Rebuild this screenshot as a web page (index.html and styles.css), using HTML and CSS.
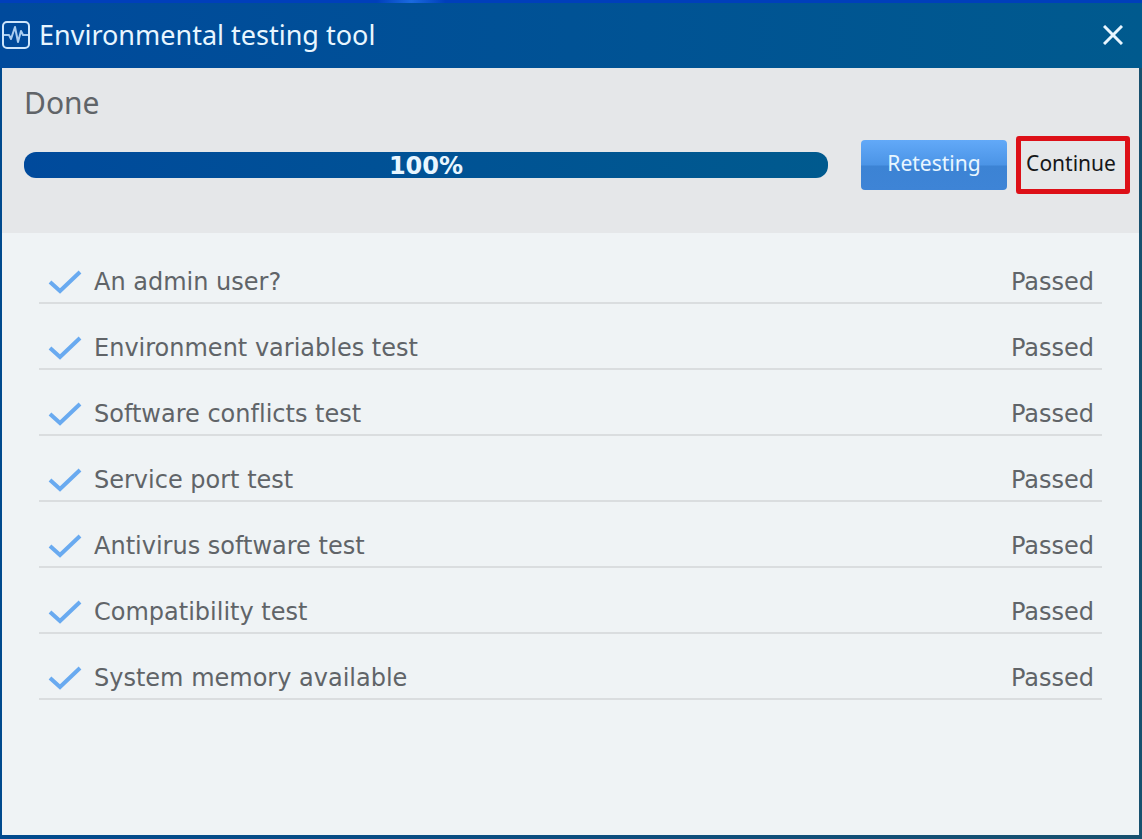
FILE: index.html
```html
<!DOCTYPE html>
<html lang="en">
<head>
    <meta charset="UTF-8">
    <meta name="viewport" content="width=device-width, initial-scale=1.0">
    <title>Environmental testing tool</title>
    <link rel="stylesheet" href="styles.css">
</head>
<body>
    <div class="window">
        <header class="title-bar">
            <svg class="app-icon" viewBox="0 0 28 28" aria-hidden="true">
                <rect x="1" y="1" width="26" height="26" rx="4"/>
                <path class="pulse" d="M2 14h5l2 4 4-12 3 15 3-11 2 4h5"/>
            </svg>
            <h1>Environmental testing tool</h1>
            <button type="button" class="close-button" aria-label="Close">
                <svg viewBox="0 0 20 20"><path d="M1 1l18 18M19 1L1 19"/></svg>
            </button>
        </header>

        <section class="summary">
            <h2>Done</h2>
            <div class="summary-row">
                <div class="progress" role="progressbar" aria-label="Test progress" aria-valuenow="100" aria-valuemin="0" aria-valuemax="100">
                    <span>100%</span>
                </div>
                <button type="button" class="retest-button">Retesting</button>
                <button type="button" class="continue-button">Continue</button>
            </div>
        </section>

        <main class="results">
            <ul class="test-list">
                <li class="test-item">
                    <svg class="check" viewBox="0 0 34 26"><path d="M2 12l10 9L32 2"/></svg>
                    <span class="test-name">An admin user?</span>
                    <span class="test-status">Passed</span>
                </li>
                <li class="test-item">
                    <svg class="check" viewBox="0 0 34 26"><path d="M2 12l10 9L32 2"/></svg>
                    <span class="test-name">Environment variables test</span>
                    <span class="test-status">Passed</span>
                </li>
                <li class="test-item">
                    <svg class="check" viewBox="0 0 34 26"><path d="M2 12l10 9L32 2"/></svg>
                    <span class="test-name">Software conflicts test</span>
                    <span class="test-status">Passed</span>
                </li>
                <li class="test-item">
                    <svg class="check" viewBox="0 0 34 26"><path d="M2 12l10 9L32 2"/></svg>
                    <span class="test-name">Service port test</span>
                    <span class="test-status">Passed</span>
                </li>
                <li class="test-item">
                    <svg class="check" viewBox="0 0 34 26"><path d="M2 12l10 9L32 2"/></svg>
                    <span class="test-name">Antivirus software test</span>
                    <span class="test-status">Passed</span>
                </li>
                <li class="test-item">
                    <svg class="check" viewBox="0 0 34 26"><path d="M2 12l10 9L32 2"/></svg>
                    <span class="test-name">Compatibility test</span>
                    <span class="test-status">Passed</span>
                </li>
                <li class="test-item">
                    <svg class="check" viewBox="0 0 34 26"><path d="M2 12l10 9L32 2"/></svg>
                    <span class="test-name">System memory available</span>
                    <span class="test-status">Passed</span>
                </li>
            </ul>
        </main>
    </div>
</body>
</html>
```
FILE: styles.css
```css
:root {
    --blue-left: #004a9c;
    --blue-right: #005a8e;
    --text-color: #606468;
    --bar: linear-gradient(to right, var(--blue-left), var(--blue-right));
}

* {
    box-sizing: border-box;
}

body {
    margin: 0;
    font-family: 'Noto Sans', sans-serif;
    font-variant-ligatures: none;
    color: var(--text-color);
}

h1, h2, ul {
    margin: 0;
    padding: 0;
    font-weight: 400;
}

button {
    padding: 0;
    font-family: inherit;
    font-size: 21px;
    border: none;
    background: none;
    cursor: pointer;
}

/* the top padding shows the bright edge above the title bar */
.window {
    display: flex;
    flex-direction: column;
    min-height: 100vh;
    padding: 3px 3px 4px 2px;
    background:
        linear-gradient(to right, #003fbb 33%, #1a6ae0 36%, #003fbb 39%) top / 100% 3px no-repeat,
        linear-gradient(to right, #004a8e, #17506e);
}

/* title bar */
.title-bar {
    display: flex;
    align-items: center;
    gap: 9px;
    height: 65px;
    margin: 0 -3px 0 -2px;
    padding: 0 19px 2px 2px;
    background: var(--bar);
    color: #e8f6ff;
}

.title-bar h1 {
    flex: 1;
    font-size: 27px;
    line-height: 32px;
}

.app-icon {
    width: 28px;
    height: 28px;
    fill: none;
    stroke: #cfe6fb;
    stroke-width: 2;
}

.app-icon .pulse {
    stroke: #a9cdf0;
    stroke-linejoin: round;
}

.close-button {
    display: flex;
    color: #e8f6ff;
}

.close-button svg {
    width: 20px;
    height: 20px;
    fill: none;
    stroke: currentColor;
    stroke-width: 3;
}

/* progress */
.summary {
    height: 165px;
    padding: 16px 9px 0 22px;
    background-color: #e5e7e9;
}

.summary h2 {
    font-size: 30px;
    line-height: 38px;
}

.summary-row {
    display: flex;
    align-items: center;
    margin-top: 14px;
}

.progress {
    flex: 1;
    height: 26px;
    border-radius: 12px;
    background: var(--bar);
    color: #e8f6ff;
    font-family: 'DejaVu Sans', sans-serif;
    font-size: 24px;
    font-weight: 700;
    line-height: 28px;
    text-align: center;
}

.retest-button,
.continue-button {
    padding-bottom: 4px;
}

.retest-button {
    width: 146px;
    height: 50px;
    margin: 0 9px 0 33px;
    border-radius: 4px;
    background: linear-gradient(#62a9f8, #4b94e6 50%, #3c83d4 52%, #3e84d6);
    color: #e8f6ff;
}

.continue-button {
    width: 114px;
    height: 58px;
    padding-right: 4px;
    border: 5px solid #dd1018;
    border-radius: 3px;
    color: #151719;
}

/* test results */
.results {
    flex: 1;
    padding: 5px 37px 0;
    background-color: #eff3f5;
}

.test-list {
    list-style: none;
}

.test-item {
    display: flex;
    align-items: flex-end;
    height: 66px;
    padding: 0 8px 6px 9px;
    border-bottom: 2px solid #dadddf;
    font-family: 'DejaVu Sans', sans-serif;
    font-size: 24px;
    line-height: 28px;
}

.check {
    width: 34px;
    height: 26px;
    margin-right: 12px;
    fill: none;
    stroke: #69aaf0;
    stroke-width: 4;
}

.test-name {
    flex: 1;
}
```
